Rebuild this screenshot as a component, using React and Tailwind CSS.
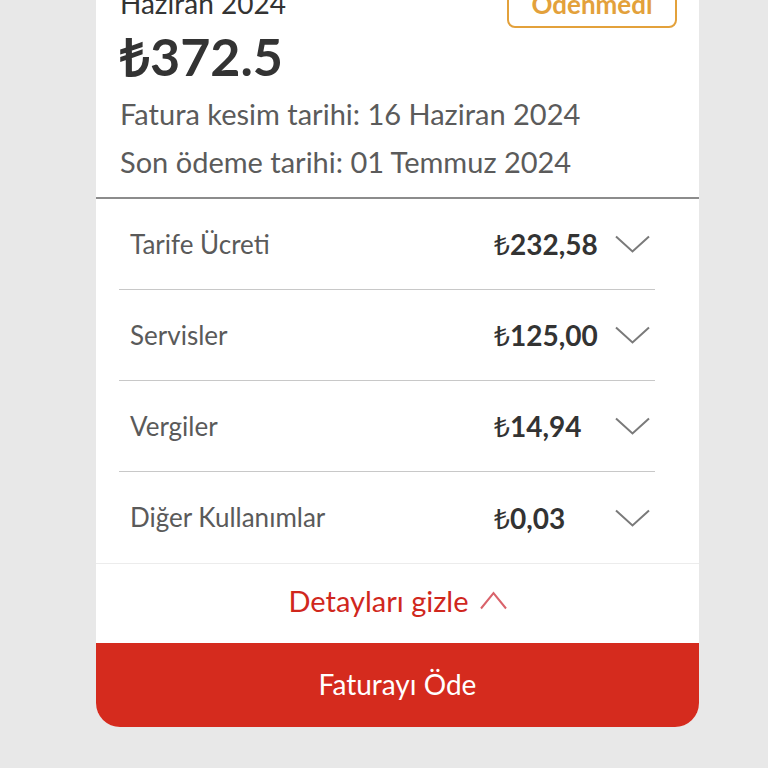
import React from 'react';

const items = [
  { label: 'Tarife Ücreti', amount: '232,58' },
  { label: 'Servisler', amount: '125,00' },
  { label: 'Vergiler', amount: '14,94' },
  { label: 'Diğer Kullanımlar', amount: '0,03' },
];

// lira sign looks closer to the original in Open Sans
const Lira = () => <span style={{ fontFamily: '"Open Sans", sans-serif' }} className="font-normal">₺</span>;

// thin chevron used on each row
const ChevronDown = () => (
  <svg width="35" height="18" viewBox="0 0 35 18" fill="none">
    <polyline points="1,1.5 17.5,16.5 34,1.5" stroke="#7a7a7a" strokeWidth="2" />
  </svg>
);

const ChevronUp = () => (
  <svg width="27" height="19" viewBox="0 0 27 19" fill="none">
    <polyline points="1,17.5 13.5,2 26,17.5" stroke="#d9636b" strokeWidth="2" />
  </svg>
);

const App = () => {
  return (
    <div
      className="h-screen overflow-hidden bg-[#e8e8e8]"
      style={{ fontFamily: 'Lato, "Open Sans", sans-serif' }}
    >
      <div className="ml-[96px] mt-[-20px] w-[603px] bg-white rounded-b-[24px] overflow-hidden flex flex-col">
        {/* Header */}
        <div className="pl-6 pr-[22px] pb-[11px] border-b-2 border-[#8c8c8c]">
          <div className="flex justify-between items-end">
            <span className="text-[28px] leading-[36px] text-[#333] mb-[7px]">Haziran 2024</span>
            <span className="h-[48px] w-[170px] flex items-center justify-center border-2 border-[#e3a13b] rounded-[8px] text-[26px] font-bold text-[#e3a13b]">
              Ödenmedi
            </span>
          </div>
          <p className="text-[52px] leading-[60px] font-bold text-[#333] mt-[-2px]">
            <span style={{ fontFamily: '"Open Sans", sans-serif' }} className="font-semibold">₺</span>372.5
          </p>
          <p className="text-[29px] leading-[48px] text-[#5b5b5b] mt-[4px]">Fatura kesim tarihi: 16 Haziran 2024</p>
          <p className="text-[29px] leading-[48px] text-[#5b5b5b]">Son ödeme tarihi: 01 Temmuz 2024</p>
        </div>

        {/* Detail rows */}
        <div className="ml-[23px] mr-[44px]">
          {items.map((it, i) => (
            <div
              key={it.label}
              className={`h-[91px] flex items-center pl-[11px] pr-[5px] ${i < items.length - 1 ? 'border-b border-[#c8c8c8]' : ''}`}
            >
              <span className="flex-1 text-[26px] text-[#5a5a5a]">{it.label}</span>
              <span className="w-[121px] text-[28px] font-bold text-[#333]">
                <Lira />{it.amount}
              </span>
              <ChevronDown />
            </div>
          ))}
        </div>

        {/* Toggle */}
        <div className="h-[80px] pb-[6px] border-t border-[#ececec] flex items-center justify-center gap-[11px]">
          <span className="text-[29px] text-[#d0271d]">Detayları gizle</span>
          <ChevronUp />
        </div>

        {/* Pay button */}
        <button className="h-[84px] pb-[3px] bg-[#d52b1e] text-white text-[28px] flex items-center justify-center">
          Faturayı Öde
        </button>
      </div>
    </div>
  );
};

export default App;
